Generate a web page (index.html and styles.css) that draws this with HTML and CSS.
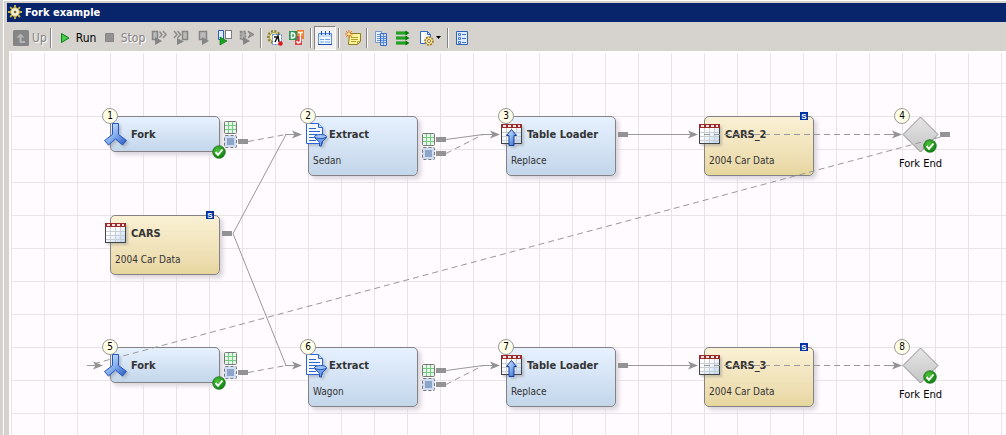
FILE: index.html
```html
<!DOCTYPE html>
<html lang="en">
<head>
<meta charset="utf-8">
<title>Fork example</title>
<link rel="stylesheet" href="styles.css">
</head>
<body>
<svg class="defs" aria-hidden="true">
  <defs>
    <linearGradient id="blue" x1="0" y1="0" x2="1" y2="1"><stop offset="0" stop-color="#e4f1ff"/><stop offset=".5" stop-color="#86b0ee"/><stop offset="1" stop-color="#2456c4"/></linearGradient>
    <linearGradient id="paper" x1="0" y1="0" x2="1" y2="1"><stop offset="0.4" stop-color="#fff"/><stop offset="1" stop-color="#b9d3f5"/></linearGradient>
    <linearGradient id="silver" x1="0" y1="0" x2="0" y2="1"><stop offset="0" stop-color="#e6e6e6"/><stop offset="1" stop-color="#c4c4c4"/></linearGradient>
    <radialGradient id="green" cx=".4" cy=".35" r=".7"><stop offset="0" stop-color="#4fc23a"/><stop offset="1" stop-color="#0c7c10"/></radialGradient>
    <symbol id="fork" viewBox="0 0 24 24"><path d="M8.500 .5h6v11l8 6-4 4.500-7-6-7 6-4-4.500 8-6z" fill="url(#blue)" stroke="#2456c0"/></symbol>
    <symbol id="table" viewBox="0 0 22 21"><rect x=".5" y=".5" width="20" height="19" fill="url(#paper)" stroke="#555"/><path d="M1 8.500h19M1 12.500h19M1 16.500h19M5.500 4v15M10.500 4v15M15.500 4v15" stroke="#c9cdd4"/><path d="M0 0h21v4H0z" fill="#9c2a2a"/><path d="M2 1h3v2H2zM7 1h3v2H7zM12 1h3v2h-3zM17 1h2v2h-2z" fill="#f6e4e4"/><path d="M.5 4v15.500h20V4" fill="none" stroke="#444"/></symbol>
    <symbol id="loader" viewBox="0 0 22 23"><use href="#table" width="22" height="21"/><path d="M10.500 5.500l5 6h-2.500v10h-5v-10H5.500z" fill="url(#blue)" stroke="#123f9c"/></symbol>
    <symbol id="extract" viewBox="0 0 22 24"><path d="M1.500 .5h12l4 4v16h-16z" fill="#f4f8ff" stroke="#2b62d9"/><path d="M13.500 .5v4h4" fill="#cfe0fb" stroke="#2b62d9"/><path d="M4 5.500h7M4 8.500h11M4 11.500h8M4 14.500h5M4 17.500h7" stroke="#3266cf"/><path d="M9.500 14.500l5 5v3.500h2v-3.500l5-5z" fill="#6f9fe8" stroke="#2254bb"/><ellipse cx="15.500" cy="13.500" rx="6" ry="2" fill="#9fc2f5" stroke="#2254bb"/></symbol>
    <symbol id="grid" viewBox="0 0 14 14"><rect x=".5" y=".5" width="12" height="12" rx="1" fill="#e8f8e8" stroke="#777"/><path d="M1 4.500h11M1 8.500h11M4.500 1v11M8.500 1v11" stroke="#73c883"/></symbol>
    <symbol id="slot" viewBox="0 0 14 14"><rect x=".5" y=".5" width="12" height="12" rx="1" fill="#cfdcf2" stroke="#777" stroke-dasharray="3 2"/><path d="M3 3h7v7H3z" fill="#8ea5ca"/></symbol>
    <symbol id="check" viewBox="0 0 14 14"><circle cx="7" cy="7" r="6.300" fill="url(#green)" stroke="#187018" stroke-width=".7"/><path d="M3.500 7l2.500 2.800L10.500 4.500" fill="none" stroke="#fff" stroke-width="1.900"/></symbol>
    <symbol id="diamond" viewBox="0 0 37 37"><path d="M18.500 1L36 18.500 18.500 36 1 18.500z" fill="url(#silver)" stroke="#8c8c8c"/></symbol>
    <symbol id="doc-run" viewBox="0 0 16 16"><path d="M4.500 1.500h7v8h-7z" fill="#bbb" stroke="#858585" stroke-width="1.500"/><path d="M7 7l7 4-7 4z" fill="#858585"/></symbol>
    <marker id="tip" viewBox="0 0 10 10" refX="9" refY="5" markerWidth="10" markerHeight="10" orient="0" markerUnits="userSpaceOnUse"><path d="M0 1l10 4-10 4 2.500-4z" fill="#939393"/></marker>
  </defs>
</svg>
<main class="window">
  <header class="titlebar">
    <svg class="gear" viewBox="0 0 16 16"><path d="M7.500 0v15M0 7.500h15M2.300 2.300l10.500 10.500M12.800 2.300L2.300 12.800" stroke="#c8b64c" stroke-width="2"/><circle cx="7.500" cy="7.500" r="4.700" fill="#f3edcf" stroke="#b7a33a"/><circle cx="7.500" cy="7.500" r="1.400" fill="#6f6a3a"/></svg>
    <h1 class="title">Fork example</h1>
  </header>
  <nav class="toolbar" aria-label="Job toolbar">
    <button class="tool tool-up" disabled><svg class="ico" viewBox="0 0 16 16"><rect width="16" height="16" rx="1.500" fill="#858585"/><path d="M12 12H7.500V6" fill="none" stroke="#b5b5b5" stroke-width="2"/><path d="M3.500 7.500l4-4 4 4z" fill="#b5b5b5"/></svg>Up</button>
    <span class="sep"></span>
    <button class="tool tool-run"><svg class="ico" viewBox="0 0 16 16"><path d="M4.500 3.500l7.500 4.500-7.500 4.500z" fill="#45cb4d" stroke="#098018"/></svg>Run</button>
    <button class="tool tool-stop" disabled><svg class="ico" viewBox="0 0 16 16"><path d="M3.500 3.500h8v8h-8z" fill="#929292" stroke="#858585"/></svg>Stop</button>
    <button class="tool tool-icon" disabled aria-label="Run from selected"><svg class="ico" viewBox="0 0 16 16"><path d="M1.500 1.500h5v8h-5z" fill="#bbb" stroke="#858585" stroke-width="1.500"/><path d="M4 7l7 4-7 4z" fill="#858585"/><path d="M8.500 1.500l2.500 3-2.500 3M12 1l3 3.500L12 8" fill="none" stroke="#8c8c8c" stroke-width="1.500"/></svg></button>
    <button class="tool tool-icon" disabled aria-label="Run to selected"><svg class="ico" viewBox="0 0 16 16"><path d="M9.500 1.500h5v8h-5z" fill="#bbb" stroke="#858585" stroke-width="1.500"/><path d="M4 8l7 3.500L4 15z" fill="#858585"/><path d="M1 1l3 3.500L1 8M4.500 1l3 3.500-3 3.500" fill="none" stroke="#8c8c8c" stroke-width="1.500"/></svg></button>
    <button class="tool tool-icon" disabled aria-label="Run selected"><svg class="ico" viewBox="0 0 16 16"><use href="#doc-run"/></svg></button>
    <button class="tool tool-icon" aria-label="Step"><svg class="ico" viewBox="0 0 16 16"><path d="M1.500 .5h5v9h-5z" fill="#dce9fb" stroke="#2e5fb8"/><rect x="8.500" y=".5" width="6" height="8" fill="#fff" stroke="#111" stroke-dasharray="1 1"/><path d="M3 7l7 4-7 4z" fill="#18a622" stroke="#08760f" stroke-width=".7"/></svg></button>
    <button class="tool tool-icon" disabled aria-label="Continue"><svg class="ico" viewBox="0 0 16 16"><rect x="1.500" y="1.500" width="5" height="8" fill="#aaa" stroke="#858585" stroke-width="1.500" stroke-dasharray="2 1"/><path d="M4 7l7 4-7 4z" fill="#858585"/><path d="M9 1l2 3.500L9 8l6-3.500z" fill="#999" stroke="#858585"/></svg></button>
    <span class="sep"></span>
    <button class="tool tool-icon" aria-label="Job options"><svg class="ico" viewBox="0 0 16 16"><circle cx="7" cy="7" r="6" fill="none" stroke="#8c8422" stroke-width="2" stroke-dasharray="2 1.500"/><circle cx="7" cy="7" r="4.500" fill="#f1ebbc" stroke="#a09a40"/><path d="M5.500 4.500h9v10h-9z" fill="#fff" stroke="#4d82cf" stroke-dasharray="2 1"/><path d="M8 12l3-6 1 6M7 7h5" fill="none" stroke="#111" stroke-width="1.500"/><circle cx="13.500" cy="13.500" r="2.200" fill="#e01414"/></svg></button>
    <button class="tool tool-icon" aria-label="Data job view"><svg class="ico" viewBox="0 0 16 16"><path d="M8 0h7v9H8z" fill="#f08030"/><path d="M6 6h7v9H6z" fill="#d94848"/><path d="M0 1h8v9H0z" fill="#2b9657"/><path d="M2.500 3v5h1c3 0 3-5 0-5zM9 2.500h5M11.500 2.500v8c0 3-3.500 3-3.500.5" fill="none" stroke="#fff" stroke-width="1.500"/></svg></button>
    <span class="sep"></span>
    <button class="tool tool-icon pressed" aria-pressed="true" aria-label="Details"><svg class="ico" viewBox="0 0 16 16"><path d="M1.500 3.500h13v11h-13z" fill="#eff6ff" stroke="#5b8fdd"/><path d="M2 4h12v3H2z" fill="#c8defc"/><path d="M4.500 1v4M8.500 1v4M12.500 1v4M1 14.500h14" stroke="#1c4fae"/><path d="M3 9.500h4M3 12h4M8 9.500h5M8 12h5" stroke="#70a3e6"/></svg></button>
    <span class="sep"></span>
    <button class="tool tool-icon" aria-label="Add note"><svg class="ico" viewBox="0 0 16 16"><path d="M4.500 3.500h11v8l-3 3h-9z" fill="#fff49b" stroke="#8b7d21"/><path d="M6 7.500h7M6 9.500h7M6 11.500h5M12.500 14v-2.500H15" fill="none" stroke="#b5a132"/><path d="M4 0v8M0 4h8M1 1l6 6M7 1L1 7" stroke="#e8781b"/><circle cx="4" cy="4" r="1.300" fill="#fff0a0"/></svg></button>
    <span class="sep"></span>
    <button class="tool tool-icon" aria-label="Copy columns"><svg class="ico" viewBox="0 0 16 16"><path d="M2.500 1.500h6v11h-6z" fill="#e8f1ff" stroke="#7799cc"/><path d="M4 4.500h3M4 6.500h3M4 8.500h3M4 10.500h3" stroke="#6d94d3"/><path d="M7.500 3.500h6v12h-6z" fill="#cbdffa" stroke="#3b6dc4"/><path d="M8 6.500h5M8 8.500h5M8 10.500h5M8 12.500h5M10.500 4v11" stroke="#5d8bdb"/></svg></button>
    <button class="tool tool-icon" aria-label="Map columns"><svg class="ico" viewBox="0 0 16 16"><path d="M1 3h11M1 8h11M1 13h11" stroke="#0c8a0c" stroke-width="3"/><path d="M1 3h11M1 8h11M1 13h11" stroke="#2fc22f"/><path d="M10.500 .5L14.500 3 10.500 5.500zM10.500 5.500L14.500 8 10.500 10.500zM10.500 10.500l4 2.500-4 2.500z" fill="#087a08"/></svg></button>
    <button class="tool tool-drop" aria-label="Properties menu"><svg class="ico" viewBox="0 0 16 16"><path d="M2.500 1.500h7l3 3v9h-10z" fill="url(#paper)" stroke="#3269ca"/><path d="M9.500 1.500v3h3" fill="none" stroke="#3269ca"/><circle cx="11" cy="11" r="4" fill="#f5e18c" stroke="#94752a" stroke-width="1.500" stroke-dasharray="2 1"/><circle cx="11" cy="11" r="1.500" fill="#fff" stroke="#967b33"/></svg><svg class="caret" viewBox="0 0 5 3"><path d="M0 0h5L2.500 3z"/></svg></button>
    <span class="sep"></span>
    <button class="tool tool-icon" aria-label="List"><svg class="ico" viewBox="0 0 16 16"><path d="M2.500 1.500h11v13h-11z" fill="#e1edff" stroke="#2f64bd"/><path d="M4.500 3.500h2v2h-2zM4.500 7.500h2v2h-2zM4.500 11.500h2v2h-2z" fill="#fff" stroke="#3e76ce"/><path d="M8 4.500h4M8 8.500h4M8 12.500h4" stroke="#3e76ce"/></svg></button>
  </nav>
  <section class="canvas" aria-label="Job diagram">
    <article class="node step short r1 c1"><span class="num">1</span><svg class="pic pic-fork"><use href="#fork"/></svg><h2 class="name">Fork</h2><svg class="status"><use href="#check"/></svg><div class="ports ports-top"><svg><use href="#grid"/></svg><svg><use href="#slot"/></svg></div></article>
    <article class="node step r1 c2"><span class="num">2</span><svg class="pic pic-extract"><use href="#extract"/></svg><h2 class="name">Extract</h2><p class="desc">Sedan</p><div class="ports"><svg><use href="#grid"/></svg><svg><use href="#slot"/></svg></div></article>
    <article class="node step r1 c3"><span class="num">3</span><svg class="pic pic-loader"><use href="#loader"/></svg><h2 class="name">Table Loader</h2><p class="desc">Replace</p></article>
    <article class="node data r1 c4"><span class="lib">S</span><svg class="pic pic-table"><use href="#table"/></svg><h2 class="name">CARS_2</h2><p class="desc">2004 Car Data</p></article>
    <article class="end r1 c5"><span class="num">4</span><svg class="diamond"><use href="#diamond"/></svg><svg class="status"><use href="#check"/></svg><p class="caption">Fork End</p></article>
    <article class="node data r2 c1"><span class="lib">S</span><svg class="pic pic-table"><use href="#table"/></svg><h2 class="name">CARS</h2><p class="desc">2004 Car Data</p></article>
    <article class="node step short r3 c1"><span class="num">5</span><svg class="pic pic-fork"><use href="#fork"/></svg><h2 class="name">Fork</h2><svg class="status"><use href="#check"/></svg><div class="ports ports-top"><svg><use href="#grid"/></svg><svg><use href="#slot"/></svg></div></article>
    <article class="node step r3 c2"><span class="num">6</span><svg class="pic pic-extract"><use href="#extract"/></svg><h2 class="name">Extract</h2><p class="desc">Wagon</p><div class="ports"><svg><use href="#grid"/></svg><svg><use href="#slot"/></svg></div></article>
    <article class="node step r3 c3"><span class="num">7</span><svg class="pic pic-loader"><use href="#loader"/></svg><h2 class="name">Table Loader</h2><p class="desc">Replace</p></article>
    <article class="node data r3 c4"><span class="lib">S</span><svg class="pic pic-table"><use href="#table"/></svg><h2 class="name">CARS_3</h2><p class="desc">2004 Car Data</p></article>
    <article class="end r3 c5"><span class="num">8</span><svg class="diamond"><use href="#diamond"/></svg><svg class="status"><use href="#check"/></svg><p class="caption">Fork End</p></article>
    <svg class="wires" aria-hidden="true">
      <defs>
        <g id="row">
          <path class="port" d="M227 86h10v5h-10zM425 84h10v5h-10zM425 98h10v5h-10zM607 79h10v5h-10z"/>
          <path class="wire dash" d="M237 88.500L275 81.500M435 100.500L472 81.500M693 81.500H881"/>
          <path class="wire" marker-end="url(#tip)" d="M274 81.500H290"/>
          <path class="wire" marker-end="url(#tip)" d="M435 86.500L472 81.500H488"/>
          <path class="wire" marker-end="url(#tip)" d="M617 81.500H686"/>
          <path class="wire" marker-end="url(#tip)" d="M876 81.500H890"/>
        </g>
      </defs>
      <use href="#row"/>
      <use href="#row" y="231"/>
      <path class="port" d="M211 178h10v5h-10zM929 79h10v5h-10z"/>
      <path class="wire" d="M275 81.500L222 180.500 275 312.500"/>
      <path class="wire dash" d="M939 81.500L82 311"/>
      <path class="wire" marker-end="url(#tip)" d="M76 312.500H91"/>
    </svg>
  </section>
</main>
</body>
</html>
```
FILE: styles.css
```css
* { box-sizing: border-box; }
html, body { height: 100%; }
body {
  margin: 0;
  background: #d6d3ce;
  color: #000;
  font-family: "DejaVu Sans Condensed", "DejaVu Sans", sans-serif;
  font-size: 11px;
  overflow: hidden;
}
h1, h2, p { margin: 0; }
.defs { position: absolute; width: 0; height: 0; }
.window {
  display: flex;
  flex-direction: column;
  height: 100%;
  margin-left: 3px;
  padding: 2px 0 0 3px;
  border-top: 1px solid #fff;
  border-left: 1px solid #fff;
}
.titlebar {
  display: flex;
  align-items: center;
  gap: 2px;
  height: 19px;
  padding-left: 1px;
  background: #08246b;
  color: #fff;
}
.gear { width: 15px; height: 15px; }
.title { font-size: 11px; font-weight: bold; line-height: 16px; }
.toolbar {
  display: flex;
  align-items: center;
  height: 29px;
  padding: 2px 0 0 5px;
}
.tool {
  display: flex;
  flex: none;
  align-items: center;
  justify-content: center;
  gap: 3px;
  height: 24px;
  padding: 0;
  border: 0;
  background: none;
  color: #000;
  font: inherit;
  font-size: 12px;
  white-space: nowrap;
}
.tool:disabled { color: #848284; text-shadow: 1px 1px #fff; }
.tool-up { width: 36px; }
.tool-run { width: 45px; }
.tool-stop { width: 49px; }
.tool-icon { width: 22px; }
.tool-drop { width: 31px; gap: 2px; }
.pressed { background: #f1f0ee; border: 1px solid; border-color: #848284 #fff #fff #848284; }
.ico { width: 16px; height: 16px; flex: none; }
.caret { width: 5px; height: 3px; }
.sep {
  flex: none;
  width: 2px;
  height: 20px;
  margin: 0 2px;
  border-left: 1px solid #848284;
  border-right: 1px solid #fff;
}
.canvas {
  flex: 1;
  position: relative;
  min-height: 0;
  margin-left: 2px;
  border-top: 2px solid #fff;
  border-left: 2px solid #fff;
  background-color: #fffbff;
  background-image:
    linear-gradient(to right, #e7e3e7 1px, transparent 1px),
    linear-gradient(to bottom, #e7e3e7 1px, transparent 1px);
  background-size: 33px 33px;
  background-position: 0 0, 0 30px;
  overflow: hidden;
}
.node, .end { position: absolute; }
.r1 { top: 63px; }
.r2 { top: 162px; }
.r3 { top: 294px; }
.c1 { left: 99px; }
.c2 { left: 297px; }
.c3 { left: 495px; }
.c4 { left: 693px; }
.c5 { left: 891px; }
.node {
  width: 110px;
  height: 60px;
  padding: 10px 0 0 4px;
  border: 1px solid #848284;
  border-radius: 5px;
  box-shadow: 3px 3px 4px #d8d4da;
  color: #333;
}
.short { height: 36px; }
.step { background: linear-gradient(#e7f1ff, #c3d6ea); }
.data { background: linear-gradient(#faf1d5, #ecdcae 80%, #e5d69c); }
.name { padding-left: 16px; font-size: 11px; line-height: 16px; }
.desc { margin-top: 12px; font-size: 10px; line-height: 12px; }
.num {
  position: absolute;
  z-index: 3;
  top: -9px;
  left: -9px;
  width: 16px;
  height: 16px;
  border: 1px solid #999;
  border-radius: 50%;
  background: #ffffe7;
  color: #000;
  font-size: 10px;
  line-height: 14px;
  text-align: center;
}
.lib {
  position: absolute;
  z-index: 3;
  top: -5px;
  left: 95px;
  width: 8px;
  height: 8px;
  background: #0033a0;
  color: #fff;
  font-family: "Liberation Sans", Arial, sans-serif;
  font-size: 8px;
  font-weight: bold;
  line-height: 9px;
  text-align: center;
}
.pic { position: absolute; filter: drop-shadow(2px 2px 1px #8886); }
.pic-fork { top: 6px; left: -7px; width: 24px; height: 24px; z-index: 3; }
.pic-table { top: 7px; left: -6px; width: 22px; height: 21px; }
.pic-loader { top: 7px; left: -6px; width: 22px; height: 23px; }
.pic-extract { top: 6px; left: -4px; width: 22px; height: 24px; }
.status { position: absolute; z-index: 3; top: 28px; left: 101px; width: 14px; height: 14px; }
.ports {
  position: absolute;
  top: 16px;
  left: 113px;
  display: flex;
  flex-direction: column;
}
.ports-top { top: 4px; }
.ports svg { width: 14px; height: 14px; }
.end { width: 37px; display: flex; flex-direction: column; align-items: center; }
.end .num { top: -8px; left: -8px; }
.end .status { top: 23px; left: 21px; }
.diamond { width: 37px; height: 37px; }
.caption { margin-top: 4px; font-size: 11px; line-height: 14px; white-space: nowrap; }
.wires { position: absolute; z-index: 2; inset: 0; width: 100%; height: 100%; pointer-events: none; }
.port { fill: #939393; }
.wire { fill: none; stroke: #999; stroke-width: 1; }
.dash { stroke-dasharray: 6 4; }
```
